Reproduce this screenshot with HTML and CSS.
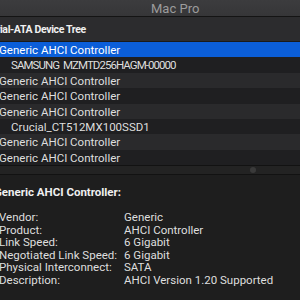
FILE: index.html
```html
<!DOCTYPE html>
<html>
<head>
<meta charset="utf-8">
<link rel="stylesheet" href="styles.css">
</head>
<body>
<div class="window">
  <div class="titlebar"><span class="title">Mac Pro</span></div>
  <div class="tree-header">Serial-ATA Device Tree</div>
  <div class="tree">
    <div class="row selected">Generic AHCI Controller</div>
    <div class="row child caps">SAMSUNG MZMTD256HAGM-00000</div>
    <div class="row">Generic AHCI Controller</div>
    <div class="row">Generic AHCI Controller</div>
    <div class="row">Generic AHCI Controller</div>
    <div class="row child">Crucial_CT512MX100SSD1</div>
    <div class="row">Generic AHCI Controller</div>
    <div class="row">Generic AHCI Controller</div>
  </div>
  <div class="splitter"><span class="knob"></span></div>
  <div class="detail">
    <div class="detail-title">Generic AHCI Controller:</div>
    <div class="props">
      <span>Vendor:</span><span>Generic</span>
      <span>Product:</span><span>AHCI Controller</span>
      <span>Link Speed:</span><span>6 Gigabit</span>
      <span>Negotiated Link Speed:</span><span>6 Gigabit</span>
      <span>Physical Interconnect:</span><span>SATA</span>
      <span>Description:</span><span>AHCI Version 1.20 Supported</span>
    </div>
  </div>
</div>
</body>
</html>
```
FILE: styles.css
```css
html, body {
  margin: 0;
  padding: 0;
  background: #1e1e1e;
  overflow: hidden;
}
.window {
  width: 300px;
  height: 300px;
  display: flex;
  flex-direction: column;
  font-family: Roboto, "Noto Sans", sans-serif;
  font-size: 11.5px;
  color: #dedede;
  background: #1e1e1e;
}
.titlebar {
  height: 17px;
  flex: none;
  background: linear-gradient(#3c3c3e, #363638);
  border-bottom: 1px solid #141414;
  box-sizing: border-box;
  display: flex;
  align-items: center;
  padding-left: 151px;
}
.title {
  color: #9c9c9c;
  font-size: 13px;
  line-height: 17px;
  margin-top: 1px;
}
.tree-header {
  height: 25px;
  flex: none;
  box-sizing: border-box;
  background: #2c2c2e;
  border-bottom: 1px solid #1a1a1a;
  font-weight: 700;
  color: #f0f0f0;
  font-size: 10.5px;
  letter-spacing: -0.35px;
  line-height: 24px;
  padding-top: 1px;
  text-indent: -15px;
  white-space: nowrap;
}
.tree {
  flex: none;
  display: flex;
  flex-direction: column;
}
.row {
  height: 15.4px;
  line-height: 15.4px;
  box-sizing: border-box;
  padding-top: 1px;
  white-space: nowrap;
  text-indent: -1px;
  background: #2a2a2c;
}
.row:nth-child(even) {
  background: #1f1f21;
}
.row.child {
  text-indent: 11px;
}
.row.caps {
  letter-spacing: -0.95px;
  word-spacing: 2px;
}
.row.selected {
  background: #0b5ed8;
  color: #ffffff;
}
.splitter {
  height: 10px;
  flex: none;
  box-sizing: border-box;
  border-top: 1px solid #121212;
  border-bottom: 1px solid #121212;
  background: #232323;
  display: flex;
  align-items: center;
  padding-left: 250px;
}
.knob {
  width: 6px;
  height: 6px;
  border-radius: 50%;
  background: #3a3a3a;
}
.detail {
  flex: 1;
  background: #1e1e1e;
  padding-top: 10px;
}
.detail-title {
  font-weight: 700;
  color: #f0f0f0;
  line-height: 14px;
  text-indent: -6px;
  white-space: nowrap;
}
.props {
  margin-top: 12px;
  display: grid;
  grid-template-columns: 125px auto;
  line-height: 12.5px;
  white-space: nowrap;
  margin-left: -1px;
}
```
